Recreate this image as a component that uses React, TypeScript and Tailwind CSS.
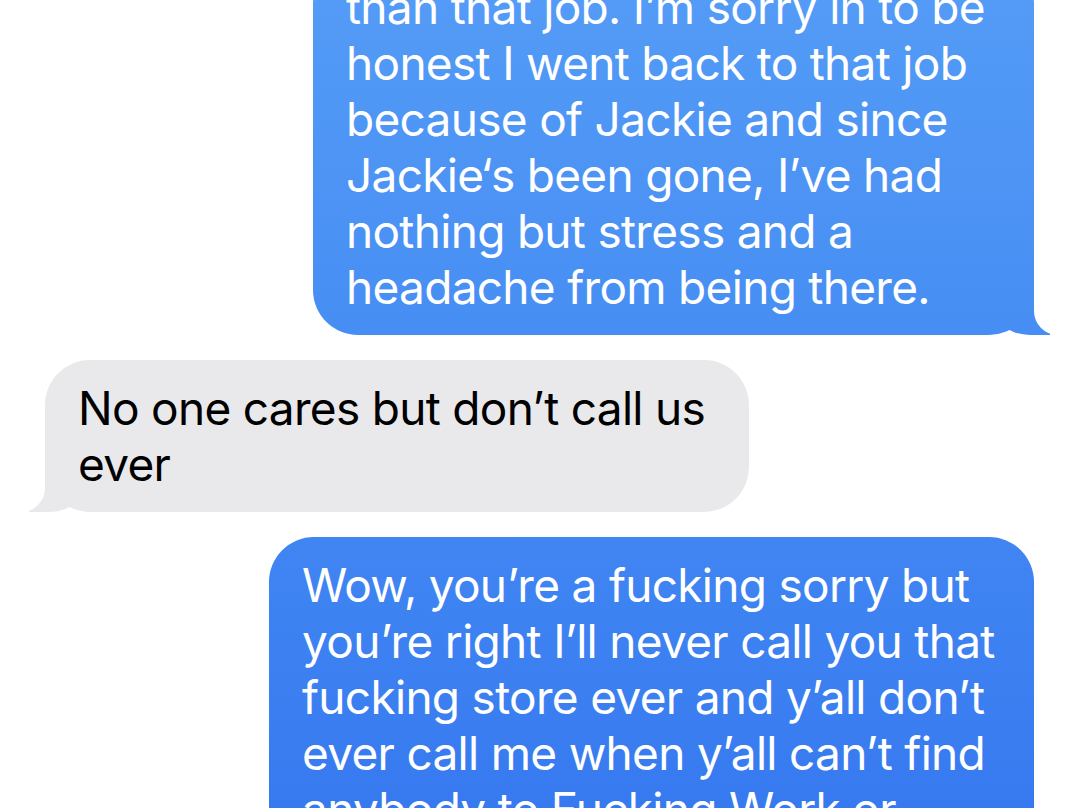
import React from 'react';

type Msg = { from: 'me' | 'them'; lines: string[] };

const messages: Msg[] = [
  {
    from: 'me',
    lines: [
      'than that job. I’m sorry in to be',
      'honest I went back to that job',
      'because of Jackie and since',
      'Jackie‘s been gone, I’ve had',
      'nothing but stress and a',
      'headache from being there.',
    ],
  },
  { from: 'them', lines: ['No one cares but don’t call us', 'ever'] },
  {
    from: 'me',
    lines: [
      'Wow, you’re a fucking sorry but',
      'you’re right I’ll never call you that',
      'fucking store ever and y’all don’t',
      'ever call me when y’all can’t find',
      'anybody to Fucking Work or',
    ],
  },
];

const Bubble: React.FC<{ msg: Msg; className: string }> = ({ msg, className }) => {
  const mine = msg.from === 'me';
  return (
    <div className={`relative rounded-[45px] px-[33px] py-[20px] ${className} ${mine ? 'self-end bg-fixed bg-linear-to-b from-[#539bf6] to-[#377af0] text-white' : 'self-start bg-[#e9e9eb] text-black'}`}>
      {/* tail */}
      {mine ? (
        <>
          <div className="absolute bottom-0 -right-[16px] h-[60px] w-[60px] rounded-bl-[40px_34px] bg-fixed bg-linear-to-b from-[#539bf6] to-[#377af0]" />
          <div className="absolute bottom-0 -right-[50px] h-[62px] w-[50px] rounded-bl-[24px] bg-white" />
        </>
      ) : (
        <>
          <div className="absolute bottom-0 -left-[16px] h-[60px] w-[60px] rounded-br-[40px_34px] bg-[#e9e9eb]" />
          <div className="absolute bottom-0 -left-[50px] h-[62px] w-[50px] rounded-br-[24px] bg-white" />
        </>
      )}
      <div className="relative">
        {msg.lines.map((l, i) => (
          <div key={i} className="whitespace-nowrap">{l}</div>
        ))}
      </div>
    </div>
  );
};

export default function App() {
  return (
    <div className="h-[808px] w-[1080px] overflow-hidden bg-white font-['Inter','Liberation_Sans',sans-serif] text-[46px] leading-[56px] tracking-[-0.7px]">
      <div className="-mt-[41px] flex flex-col gap-[25px] pl-[45px] pr-[46px]">
        <Bubble msg={messages[0]} className="w-[721px]" />
        <Bubble msg={messages[1]} className="w-[704px]" />
        <Bubble msg={messages[2]} className="w-[765px]" />
      </div>
    </div>
  );
}
